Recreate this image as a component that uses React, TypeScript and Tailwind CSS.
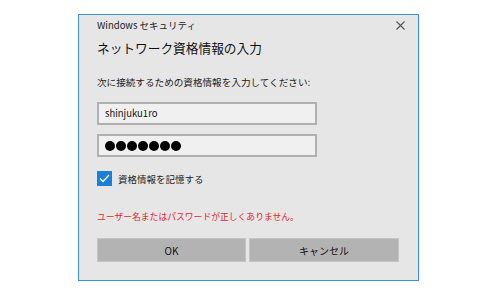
export default function App() {
  return (
    <div
      className="w-[500px] h-[298px] bg-white pt-[14px] pl-[78px]"
      style={{ fontFamily: '"Noto Sans CJK JP", "Noto Sans", sans-serif' }}
    >
      <div className="relative w-[341px] h-[267px] bg-[#e6e6e6] border border-[#3c8fd9] pl-[18px] flex flex-col">
        <div className="flex items-center justify-between pt-[4px] pr-[13px]">
          <span className="text-[9.5px] leading-[12px] text-[#222]">Windows セキュリティ</span>
          <svg width="9" height="9" viewBox="0 0 9 9" className="mt-[1px]">
            <path d="M0.5 0.5 L8.5 8.5 M8.5 0.5 L0.5 8.5" stroke="#555" strokeWidth="1.1" />
          </svg>
        </div>
        <h1 className="mt-[8px] text-[12.7px] leading-[17px] text-[#111]">ネットワーク資格情報の入力</h1>
        <p className="mt-[20px] text-[9.6px] leading-[12px] text-[#222]">次に接続するための資格情報を入力してください:</p>

        <div className="mt-[14px] w-[220px] h-[23px] bg-[#f0f0f0] border-2 border-[#b0b0b0] flex items-center pl-[6px]">
          <span className="text-[9.5px] text-[#111]">shinjuku1ro</span>
        </div>
        <div className="mt-[9px] w-[220px] h-[23px] bg-[#f0f0f0] border-2 border-[#b0b0b0] flex items-center pl-[6px] gap-[1px]">
          <span className="w-[10px] h-[10px] rounded-full bg-black" />
          <span className="w-[10px] h-[10px] rounded-full bg-black" />
          <span className="w-[10px] h-[10px] rounded-full bg-black" />
          <span className="w-[10px] h-[10px] rounded-full bg-black" />
          <span className="w-[10px] h-[10px] rounded-full bg-black" />
          <span className="w-[10px] h-[10px] rounded-full bg-black" />
          <span className="w-[10px] h-[10px] rounded-full bg-black" />
        </div>

        <div className="mt-[14px] flex items-center gap-[6px]">
          <div className="w-[15px] h-[15px] bg-[#1a7fd6] flex items-center justify-center">
            <svg width="11" height="9" viewBox="0 0 11 9">
              <path d="M1 4.5 L4 7.5 L10 1" stroke="white" strokeWidth="1.3" fill="none" />
            </svg>
          </div>
          <span className="text-[9.5px] leading-[12px] text-[#222]">資格情報を記憶する</span>
        </div>

        <p className="mt-[25px] text-[8.8px] leading-[12px] text-[#e0262e]">ユーザー名またはパスワードが正しくありません。</p>

        <div className="mt-[15px] flex gap-[3px]">
          <button className="w-[149px] h-[24px] bg-[#b3b3b3] border border-[#c4c4c4] text-[10px] text-[#111]">OK</button>
          <button className="w-[150px] h-[24px] bg-[#b3b3b3] border border-[#c4c4c4] text-[10px] text-[#111]">キャンセル</button>
        </div>
      </div>
    </div>
  );
}
